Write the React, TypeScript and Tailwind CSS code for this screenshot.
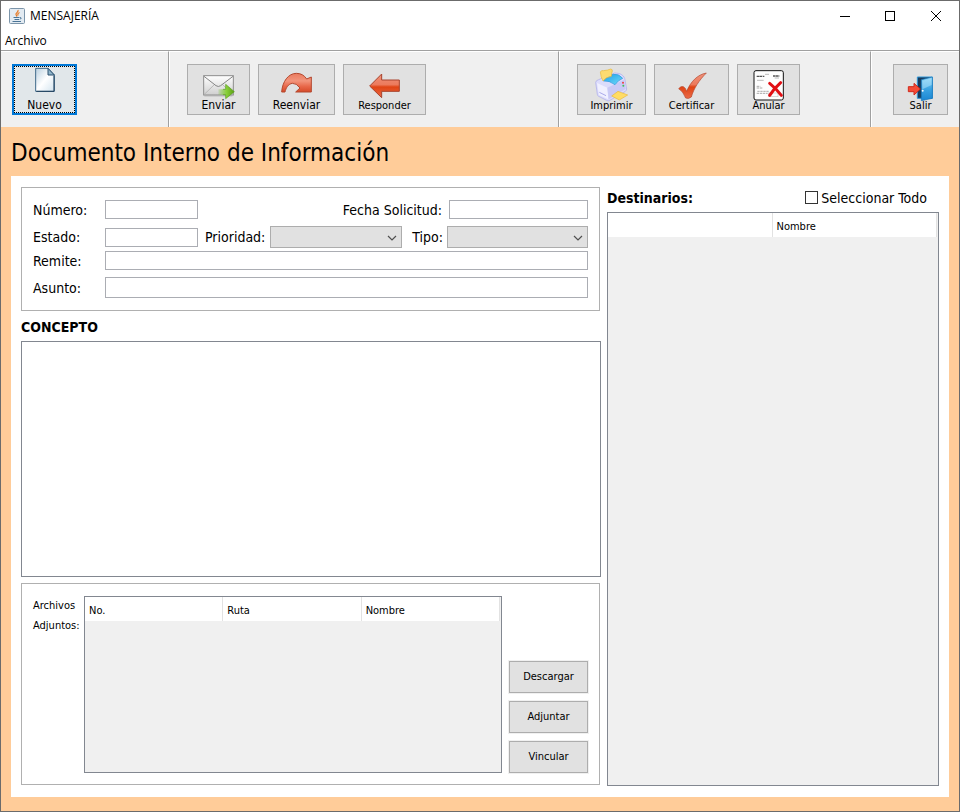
import React from "react";

const sans = "font-['DejaVu_Sans_Condensed','DejaVu_Sans',sans-serif]";

function Icon({ children }: { children: React.ReactNode }) {
  return (
    <svg viewBox="0 0 96 96" className="block h-8 w-8 shrink-0 overflow-visible" aria-hidden="true">
      {children}
    </svg>
  );
}

function Gradients() {
  return (
    <svg width="0" height="0" className="absolute" aria-hidden="true">
      <defs>
        <linearGradient id="red" x1="0" y1="0" x2="0" y2="1">
          <stop offset="0" stopColor="#f0937c" />
          <stop offset="0.45" stopColor="#ec7a5c" />
          <stop offset="0.55" stopColor="#e04414" />
          <stop offset="1" stopColor="#ea6a48" />
        </linearGradient>
        <linearGradient id="curve" x1="0" y1="0" x2="0" y2="1">
          <stop offset="0" stopColor="#ea7a5e" />
          <stop offset="0.4" stopColor="#f2957c" />
          <stop offset="0.7" stopColor="#e8684a" />
          <stop offset="1" stopColor="#d64a28" />
        </linearGradient>
        <linearGradient id="page" x1="0" y1="0" x2="1" y2="1">
          <stop offset="0" stopColor="#b9d0e0" />
          <stop offset="0.5" stopColor="#ffffff" />
          <stop offset="1" stopColor="#d3e4ef" />
        </linearGradient>
        <linearGradient id="mail" x1="0" y1="0" x2="0" y2="1">
          <stop offset="0" stopColor="#ffffff" />
          <stop offset="1" stopColor="#cfcfcf" />
        </linearGradient>
        <linearGradient id="green" x1="0" y1="0" x2="1" y2="0">
          <stop offset="0" stopColor="#7cc144" stopOpacity="0.2" />
          <stop offset="0.5" stopColor="#8ad13a" />
          <stop offset="1" stopColor="#5a9f12" />
        </linearGradient>
        <linearGradient id="door" x1="0" y1="0" x2="0" y2="1">
          <stop offset="0" stopColor="#8ed6f7" />
          <stop offset="0.5" stopColor="#3ba4e3" />
          <stop offset="1" stopColor="#1b86d2" />
        </linearGradient>
        <linearGradient id="drum" x1="0" y1="0" x2="1" y2="1">
          <stop offset="0" stopColor="#1f9fe8" />
          <stop offset="1" stopColor="#6fdcf8" />
        </linearGradient>
      </defs>
    </svg>
  );
}

const NewIcon = () => (
  <Icon>
    <path d="M20 -2H57L76 18V67H20Z" fill="url(#page)" stroke="#3f6a8a" strokeWidth="3" />
    <path d="M57 -2V18H76Z" fill="#8fb4ca" stroke="#2b506e" strokeWidth="3" />
    <path d="M75 20V67H22" fill="none" stroke="#1f3f5c" strokeWidth="3" />
  </Icon>
);

const SendIcon = () => (
  <Icon>
    <path d="M4 81H88" stroke="#bdbdbd" strokeWidth="3" />
    <rect x="2" y="20" width="89" height="58" fill="url(#mail)" stroke="#8d8d8d" strokeWidth="3" />
    <path d="M4 76L34 47M89 76L59 47" stroke="#b0b0b0" strokeWidth="2.5" />
    <path d="M3 22L39 50Q46 55 53 50L90 22" fill="none" stroke="#858585" strokeWidth="3" />
    <path d="M46 61H68V46L94 68L68 89V77H46Z" fill="url(#green)" />
    <path d="M60 61H68V46L94 68L68 89V77H60" fill="none" stroke="#5a9f1f" strokeWidth="2" />
  </Icon>
);

const ForwardIcon = () => (
  <Icon>
    <path
      d="M2 69C4 38 22 13 46 13C60 13 70 19 77 30L91 24V69H44L57 57Q46 42 34 43C22 45 15 56 12 69Z"
      fill="url(#curve)"
      stroke="#b3482f"
      strokeWidth="3"
      strokeLinejoin="round"
    />
  </Icon>
);

const ReplyIcon = () => (
  <Icon>
    <path d="M2 51L38 15V33H91V67H38V86Z" fill="url(#red)" stroke="#a8432c" strokeWidth="3" strokeLinejoin="round" />
  </Icon>
);

const PrintIcon = () => (
  <Icon>
    <path d="M-1 40Q0 34 8 32L56 12Q80 12 86 28L92 60Q92 64 88 67L40 95Q36 97 32 94L8 82Q4 80 4 76Z" fill="#dcdcfb" stroke="#a9a9ea" strokeWidth="2" />
    <path d="M3 42L34 56L37 91L9 78Z" fill="#f0f0ff" />
    <path d="M34 56L84 32L89 60L38 91Z" fill="#c9c9f6" />
    <path d="M10 70L30 80" stroke="#a9a9ea" strokeWidth="3" />
    <path d="M22 34Q34 20 52 16Q68 13 80 28Q66 34 57 47Q40 34 22 36Z" fill="url(#drum)" stroke="#2594dc" strokeWidth="2" />
    <path d="M13 9Q16 3 22 5Q36 4 44 0Q50 1 49 6Q46 14 46 22Q30 24 21 36Q14 24 13 9Z" fill="#fddb70" stroke="#e8b93c" strokeWidth="2" />
    <circle cx="81" cy="41" r="3" fill="#ef3f3f" />
    <circle cx="82" cy="50" r="3" fill="#43bf56" />
    <path d="M47 81L66 67L95 78L70 93Z" fill="#ffdc65" stroke="#e8b93c" strokeWidth="2" />
  </Icon>
);

const CertifyIcon = () => (
  <Icon>
    <path
      d="M8 59Q15 50 22 53Q29 56 32 67C44 38 64 17 91 12C69 34 53 59 46 84Q38 91 29 87Q21 66 8 59Z"
      fill="url(#red)"
      stroke="#b3442b"
      strokeWidth="2"
    />
  </Icon>
);

const VoidIcon = () => (
  <Icon>
    <rect x="3" y="5" width="88" height="88" rx="6" fill="#fdfdfd" stroke="#111111" strokeWidth="3" />
    <path d="M11 22H34M60 21H79" stroke="#555555" strokeWidth="4" strokeDasharray="8 1" />
    <path d="M36 16H48M12 34H32M65 27H78" stroke="#9b9b9b" strokeWidth="2" />
    <path d="M11 52H22M11 57H30M13 67H47M11 73H44" stroke="#808080" strokeWidth="2" strokeDasharray="7 2" />
    <rect x="47" y="72" width="28" height="11" fill="none" stroke="#c6c6c6" strokeWidth="2" />
    <path d="M50 43Q68 57 85 79M83 41Q64 58 50 79" fill="none" stroke="#e10f14" strokeWidth="9" strokeLinecap="round" />
  </Icon>
);

const ExitIcon = () => (
  <Icon>
    <path d="M37 24H82V88H37Z" fill="#183b5c" stroke="#3198d8" strokeWidth="3" />
    <path d="M49 32L82 24V88L49 95Z" fill="url(#door)" stroke="#1676b9" strokeWidth="2" />
    <path d="M52 35L80 28V48L52 61Z" fill="#b5e6fc" opacity="0.5" />
    <path d="M10 53H27V43L46 60L27 78V68H10Z" fill="#f54b36" stroke="#d02b1d" strokeWidth="3" />
    <circle cx="53" cy="65" r="3" fill="#ffffff" />
  </Icon>
);

interface ToolProps {
  label: string;
  width: string;
  icon: React.ReactNode;
  text?: string;
  focused?: boolean;
}

function ToolButton({ label, width, icon, text = "text-[11px]", focused = false }: ToolProps) {
  return (
    <button
      type="button"
      className={`relative flex h-[51px] shrink-0 flex-col items-center border pt-1 ${width} ${
        focused ? "border-[#0078d7] bg-[#e1e7ea] outline-1 -outline-offset-2 outline-[#0078d7]" : "border-[#adadad] bg-[#e1e1e1]"
      }`}
    >
      {focused && <span className="absolute inset-px border border-dotted border-black" />}
      {icon}
      <span className={`relative -mt-[3px] ${text === "text-xs" ? "leading-[14px]" : "leading-4"} ${text}`}>{label}</span>
    </button>
  );
}

function TextField({ id, size }: { id: string; size: string }) {
  return <input id={id} type="text" className={`border border-[#abadb3] bg-white px-1 text-sm outline-none ${size}`} />;
}

function Combo({ id, width }: { id: string; width: string }) {
  return (
    <div className={`relative h-[22px] ${width}`}>
      <select id={id} className="block h-full w-full appearance-none border border-[#adadad] bg-[#e1e1e1] px-1 text-sm outline-none">
        <option></option>
      </select>
      <svg viewBox="0 0 10 6" className="pointer-events-none absolute top-[9px] right-[5px] h-[6px] w-[10px]" aria-hidden="true">
        <path d="M1 1L5 5L9 1" fill="none" stroke="#505050" strokeWidth="1.2" />
      </svg>
    </div>
  );
}

function DataTable({ label, columns }: { label: string; columns: { name: string; width: string }[] }) {
  return (
    <div className="flex-1 border border-[#828790] bg-[#f0f0f0] pr-px">
      <table aria-label={label} className="w-full table-fixed border-separate border-spacing-0 text-[11px] leading-4">
        <thead>
          <tr className="h-6 bg-white">
            {columns.map((c, i) => (
              <th key={i} className={`border-r border-[#e2e2e2] p-0 pt-[3px] pl-1 text-left font-normal ${c.width}`}>
                {c.name}
              </th>
            ))}
          </tr>
        </thead>
        <tbody />
      </table>
    </div>
  );
}

const actionButton = "h-8 border border-[#adadad] bg-[#e1e1e1] text-[11px] outline-1 outline-[#f0f0f0]";

export default function App() {
  return (
    <div className={`flex min-h-screen flex-col border border-[#6b6b6b] bg-white text-black ${sans}`}>
      <Gradients />
      <header className="flex h-[30px] items-center pl-2 font-['Open_Sans','Noto_Sans',sans-serif] text-xs">
        <svg viewBox="0 0 16 16" className="h-4 w-4" aria-hidden="true">
          <rect x="0.5" y="0.5" width="15" height="15" rx="1" fill="#e3ebf2" stroke="#7c95aa" />
          <path d="M9 2C10 4 6.400 5 7 6.500Q7.300 7.500 8.200 8.500M10.500 4.500C8.500 5.500 8.500 6.500 9.300 7.500" fill="none" stroke="#e8771f" strokeWidth="1.200" />
          <path d="M4.500 9.500H10.500M5.500 11.500H10M3.500 13.500H12M11 9.500Q13.500 9.500 11 11.500" fill="none" stroke="#4a7496" />
        </svg>
        <h1 className="ml-[5px] flex-1">MENSAJERÍA</h1>
        <button type="button" aria-label="Minimizar" className="flex h-full w-[46px] items-center justify-center">
          <svg viewBox="0 0 10 10" className="mb-px h-[10px] w-[10px]"><path d="M0 5.500H10" stroke="#000" /></svg>
        </button>
        <button type="button" aria-label="Maximizar" className="flex h-full w-[44px] items-center justify-center">
          <svg viewBox="0 0 10 10" className="mb-px h-[10px] w-[10px]"><rect x="0.5" y="0.5" width="9" height="9" fill="none" stroke="#000" /></svg>
        </button>
        <button type="button" aria-label="Cerrar" className="flex h-full w-[47px] items-center justify-center">
          <svg viewBox="0 0 10 10" className="mb-px h-[10px] w-[10px]"><path d="M0 0L10 10M10 0L0 10" stroke="#000" /></svg>
        </button>
      </header>
      <nav className="flex h-[19px] items-center pl-1 font-['Open_Sans','Noto_Sans',sans-serif] text-xs">
        <button type="button">Archivo</button>
      </nav>

      <div className="flex h-[77px] border-t border-[#a0a0a0] bg-[#f0f0f0]">
        <div className="flex w-[168px] border-t border-r border-t-white border-r-[#a0a0a0] pt-3 pl-[11px]">
          <ToolButton label="Nuevo" width="w-[65px]" icon={<NewIcon />} text="text-xs" focused />
        </div>
        <div className="flex flex-1 gap-2 border-t border-r border-l border-white border-r-[#a0a0a0] pt-3 pl-[17px]">
          <ToolButton label="Enviar" width="w-[63px]" icon={<SendIcon />} text="text-xs" />
          <ToolButton label="Reenviar" width="w-[77px]" icon={<ForwardIcon />} text="text-xs" />
          <ToolButton label="Responder" width="w-[83px]" icon={<ReplyIcon />} />
        </div>
        <div className="flex w-[312px] gap-2 border-t border-r border-l border-white border-r-[#a0a0a0] pt-3 pl-[17px]">
          <ToolButton label="Imprimir" width="w-[69px]" icon={<PrintIcon />} />
          <ToolButton label="Certificar" width="w-[75px]" icon={<CertifyIcon />} />
          <ToolButton label="Anular" width="w-[63px]" icon={<VoidIcon />} />
        </div>
        <div className="flex w-[88px] border-t border-l border-white pt-3 pl-[21px]">
          <ToolButton label="Salir" width="w-[55px]" icon={<ExitIcon />} />
        </div>
      </div>

      <main className="flex flex-1 flex-col bg-[#ffcc99] px-[10px] pb-[14px]">
        <h2 className="flex h-[49px] items-center pt-[2px] text-2xl">Documento Interno de Información</h2>
        <div className="grid flex-1 grid-cols-[580fr_332fr] gap-x-[6px] bg-white px-[10px] pt-[11px] pb-[11px]">
          <section className="flex flex-col pb-px">
            <form className="mr-px flex flex-col border border-[#b0b0b0] py-3 pr-[11px] pl-[11px] text-sm">
              <div className="flex h-[19px] items-center">
                <label htmlFor="numero" className="w-[72px]">Número:</label>
                <TextField id="numero" size="h-[19px] w-[93px]" />
                <label htmlFor="fecha" className="mr-[7px] ml-auto">Fecha Solicitud:</label>
                <TextField id="fecha" size="h-[19px] w-[139px]" />
              </div>
              <div className="mt-[7px] flex h-[22px] items-center">
                <label htmlFor="estado" className="w-[72px]">Estado:</label>
                <TextField id="estado" size="h-[19px] w-[93px]" />
                <label htmlFor="prioridad" className="ml-[7px] w-[65px]">Prioridad:</label>
                <Combo id="prioridad" width="w-[132px]" />
                <label htmlFor="tipo" className="mr-1 ml-auto">Tipo:</label>
                <Combo id="tipo" width="w-[141px]" />
              </div>
              <div className="mt-[3px] flex h-[19px] items-center">
                <label htmlFor="remite" className="w-[72px]">Remite:</label>
                <TextField id="remite" size="h-[19px] flex-1" />
              </div>
              <div className="mt-[7px] flex h-[21px] items-center">
                <label htmlFor="asunto" className="w-[72px]">Asunto:</label>
                <TextField id="asunto" size="h-[21px] flex-1" />
              </div>
            </form>
            <label htmlFor="concepto" className="flex h-[30px] items-center pt-px text-sm font-bold">CONCEPTO</label>
            <textarea id="concepto" className="block min-h-[120px] w-full flex-1 resize-none border border-[#828790] p-1 text-sm outline-none" />
            <div className="mt-[6px] mr-px flex h-[202px] border border-[#b0b0b0] pt-3 pr-[11px] pb-[11px] pl-[11px]">
              <div className="w-[51px] shrink-0 text-[11px] leading-5">Archivos Adjuntos:</div>
              <div className="flex flex-1">
                <DataTable
                  label="Archivos adjuntos"
                  columns={[
                    { name: "No.", width: "w-1/3" },
                    { name: "Ruta", width: "w-1/3" },
                    { name: "Nombre", width: "w-1/3" },
                  ]}
                />
              </div>
              <div className="ml-[7px] flex w-[79px] flex-col justify-end gap-2">
                <button type="button" className={actionButton}>Descargar</button>
                <button type="button" className={actionButton}>Adjuntar</button>
                <button type="button" className={actionButton}>Vincular</button>
              </div>
            </div>
          </section>

          <section className="flex flex-col">
            <div className="flex h-[25px] items-center justify-between pr-3 pb-1 text-sm">
              <h3 className="font-bold">Destinarios:</h3>
              <label className="flex items-center gap-[3px]">
                <input type="checkbox" className="h-[13px] w-[13px] appearance-none border border-[#333333] bg-white checked:bg-[#333333]" />
                Seleccionar Todo
              </label>
            </div>
            <DataTable
              label="Destinarios"
              columns={[
                { name: "", width: "w-1/2" },
                { name: "Nombre", width: "w-1/2" },
              ]}
            />
          </section>
        </div>
      </main>
    </div>
  );
}
